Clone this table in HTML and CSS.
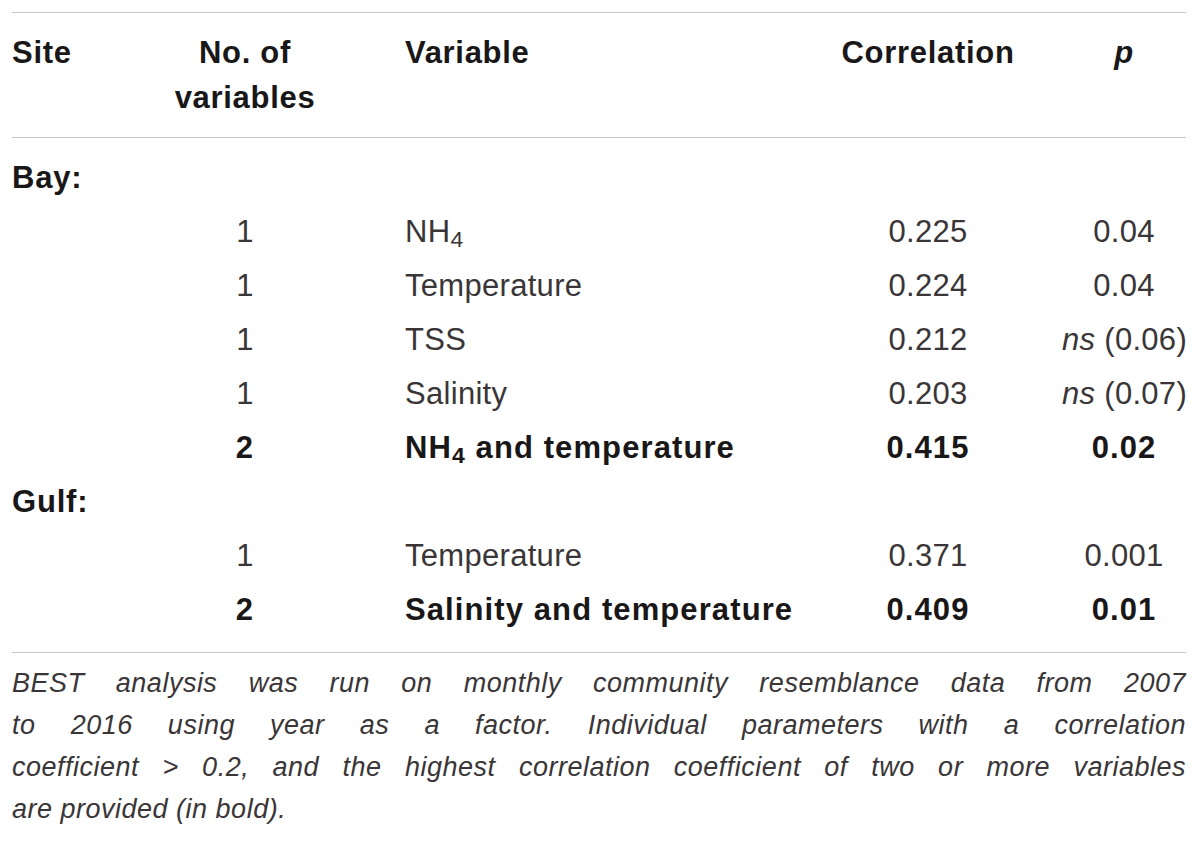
FILE: index.html
```html
<!DOCTYPE html>
<html>
<head>
<meta charset="utf-8">
<link rel="stylesheet" href="styles.css">
</head>
<body>
<div class="page">
  <table class="data">
    <colgroup>
      <col class="c-site">
      <col class="c-num">
      <col class="c-var">
      <col class="c-corr">
      <col class="c-p">
    </colgroup>
    <thead>
      <tr>
        <th class="left">Site</th>
        <th class="center">No. of<br>variables</th>
        <th class="left var">Variable</th>
        <th class="center">Correlation</th>
        <th class="center"><i>p</i></th>
      </tr>
    </thead>
    <tbody>
      <tr class="first">
        <td class="site">Bay:</td><td></td><td></td><td></td><td></td>
      </tr>
      <tr>
        <td></td><td class="center">1</td><td class="var">NH<sub>4</sub></td><td class="center">0.225</td><td class="center">0.04</td>
      </tr>
      <tr>
        <td></td><td class="center">1</td><td class="var">Temperature</td><td class="center">0.224</td><td class="center">0.04</td>
      </tr>
      <tr>
        <td></td><td class="center">1</td><td class="var">TSS</td><td class="center">0.212</td><td class="center"><i>ns</i> (0.06)</td>
      </tr>
      <tr>
        <td></td><td class="center">1</td><td class="var">Salinity</td><td class="center">0.203</td><td class="center"><i>ns</i> (0.07)</td>
      </tr>
      <tr class="bold">
        <td></td><td class="center">2</td><td class="var">NH<sub>4</sub> and temperature</td><td class="center">0.415</td><td class="center">0.02</td>
      </tr>
      <tr>
        <td class="site">Gulf:</td><td></td><td></td><td></td><td></td>
      </tr>
      <tr>
        <td></td><td class="center">1</td><td class="var">Temperature</td><td class="center">0.371</td><td class="center">0.001</td>
      </tr>
      <tr class="bold last">
        <td></td><td class="center">2</td><td class="var">Salinity and temperature</td><td class="center">0.409</td><td class="center">0.01</td>
      </tr>
    </tbody>
  </table>
  <p class="caption">
    <span class="line">BEST analysis was run on monthly community resemblance data from 2007</span>
    <span class="line">to 2016 using year as a factor. Individual parameters with a correlation</span>
    <span class="line">coefficient &gt; 0.2, and the highest correlation coefficient of two or more variables</span>
    <span class="line end">are provided (in bold).</span>
  </p>
</div>
</body>
</html>
```

FILE: styles.css
```css
html, body {
  margin: 0;
  padding: 0;
  background: #ffffff;
}

.page {
  padding: 12px 14px 0 12px;
  font-family: "Liberation Sans", Arial, sans-serif;
  color: #231f20;
}

.data {
  width: 1174px;
  border-collapse: collapse;
  table-layout: fixed;
  border-top: 1px solid #c8c8c8;
  border-bottom: 1px solid #c8c8c8;
}

.c-site { width: 153px; }
.c-num { width: 160px; }
.c-var { width: 469px; }
.c-corr { width: 268px; }
.c-p { width: 124px; }

thead th {
  font-size: 31px;
  font-weight: bold;
  line-height: 45px;
  letter-spacing: 0.7px;
  padding: 17px 0;
  vertical-align: top;
  border-bottom: 1px solid #c8c8c8;
  color: #1a1718;
}

th.left { text-align: left; }
th.var { padding-left: 80px; }

td {
  font-size: 31px;
  font-weight: normal;
  line-height: 54px;
  letter-spacing: 0.3px;
  padding: 0;
  white-space: nowrap;
  color: #3a3637;
}

.center { text-align: center; }
td.var { padding-left: 80px; }
td.site { font-weight: bold; color: #1a1718; letter-spacing: 0.8px; }

tr.first td { padding-top: 13px; }
tr.last td { padding-bottom: 15px; }

tr.bold td { font-weight: bold; color: #1a1718; letter-spacing: 1.1px; }

sub {
  font-size: 0.74em;
  line-height: 0;
  vertical-align: -0.22em;
}

.caption {
  margin: 0;
  width: 1174px;
  padding-top: 9px;
  font-size: 27px;
  line-height: 42px;
  letter-spacing: 0.5px;
  font-style: italic;
  color: #3a3637;
}

.caption .line {
  display: block;
  text-align: justify;
  text-align-last: justify;
}

.caption .line.end {
  text-align: left;
  text-align-last: left;
}
```
